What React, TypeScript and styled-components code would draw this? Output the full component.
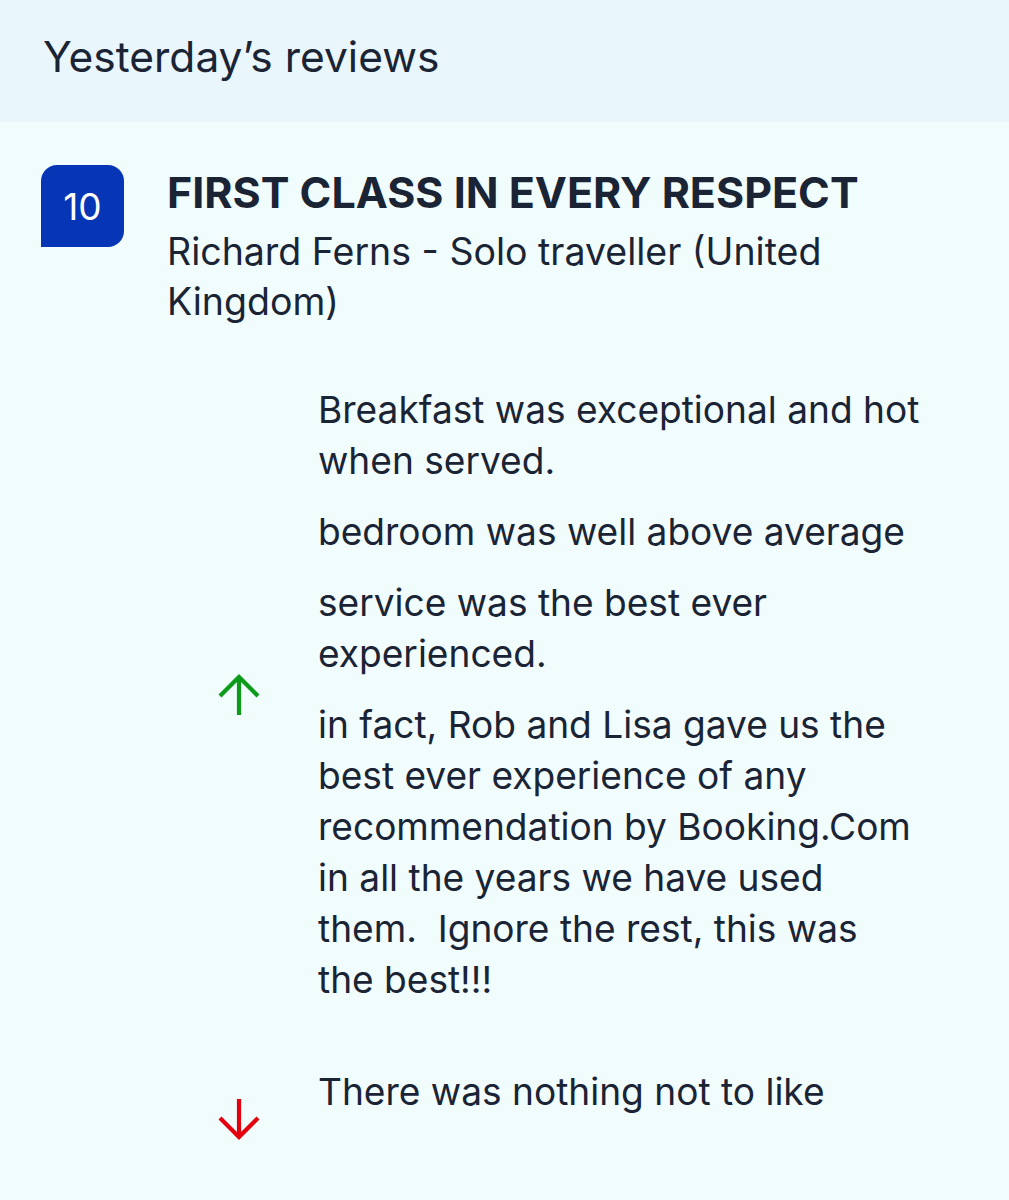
import styled, {createGlobalStyle} from "styled-components";

const GlobalStyle = createGlobalStyle`
  html, body {
    margin: 0;
    padding: 0;
    background: #f1fcfd;
  }
  body {
    font-family: Inter, "Noto Sans", "Liberation Sans", sans-serif;
    color: #1a2435;
  }
`;

const Page = styled.div`
  min-height: 1200px;
  background: #f1fcfd;
`;

const Header = styled.header`
  height: 122px;
  display: flex;
  align-items: center;
  padding: 0 0 10px 43px;
  box-sizing: border-box;
  background: #e9f6fb;
`;

const HeaderTitle = styled.h1`
  margin: 0;
  font-size: 42.5px;
  font-weight: 400;
`;

const Review = styled.article`
  display: flex;
  align-items: flex-start;
  gap: 43px;
  padding: 43px 0 0 41px;
`;

const Score = styled.div`
  flex: none;
  width: 83px;
  height: 82px;
  display: flex;
  align-items: center;
  justify-content: center;
  background: #0636b6;
  color: #fff;
  font-size: 37px;
  border-radius: 16px 16px 16px 0;
`;

const Content = styled.div`
  display: flex;
  flex-direction: column;
`;

const Title = styled.h2`
  margin: 2px 0 0;
  font-size: 43px;
  line-height: 50px;
  font-weight: 700;
`;

const Author = styled.p`
  margin: 10px 0 0;
  font-size: 37.5px;
  line-height: 50px;
  width: 690px;
`;

const Section = styled.section<{ $gap: number }>`
  display: grid;
  grid-template-columns: 143px 1fr;
  column-gap: 8px;
  align-items: center;
  margin-top: ${p => p.$gap}px;
`;

const IconCell = styled.div<{ $shift?: number }>`
  display: flex;
  justify-content: center;
  transform: translateY(${p => p.$shift || 0}px);
`;

const Body = styled.div`
  display: flex;
  flex-direction: column;
  gap: 20px;
`;

const Para = styled.p`
  margin: 0;
  font-size: 37.1px;
  line-height: 51px;
`;

const Arrow = ({up}: { up?: boolean }) => (
    <svg width="42" height="42" viewBox="0 0 42 42" fill="none"
         stroke={up ? "#0c9c1a" : "#e4000f"} strokeWidth="4.2" strokeLinecap="butt">
        {up ? (
            <>
                <path d="M21 3 V41"/>
                <path d="M2 22 L21 3 L40 22"/>
            </>
        ) : (
            <>
                <path d="M21 1 V39"/>
                <path d="M2 20 L21 39 L40 20"/>
            </>
        )}
    </svg>
);

const liked = [
    ["Breakfast was exceptional and hot", "when served."],
    ["bedroom was well above average"],
    ["service was the best ever", "experienced."],
    [
        "in fact, Rob and Lisa gave us the",
        "best ever experience of any",
        "recommendation by Booking.Com",
        "in all the years we have used",
        "them.\u00a0 Ignore the rest, this was",
        "the best!!!",
    ],
];

const lines = (l: string[]) => l.map((t, i) => (
    <span key={i}>{t}{i < l.length - 1 && <br/>}</span>
));

export default function App() {
    return (
        <Page>
            <GlobalStyle/>
            <Header>
                <HeaderTitle>Yesterday’s reviews</HeaderTitle>
            </Header>
            <Review>
                <Score>10</Score>
                <Content>
                    <Title>FIRST CLASS IN EVERY RESPECT</Title>
                    <Author>Richard Ferns - Solo traveller (United Kingdom)</Author>
                    <Section $gap={57}>
                        <IconCell><Arrow up/></IconCell>
                        <Body>
                            {liked.map((p, i) => <Para key={i}>{lines(p)}</Para>)}
                        </Body>
                    </Section>
                    <Section $gap={61}>
                        <IconCell $shift={27}><Arrow/></IconCell>
                        <Body>
                            <Para>There was nothing not to like</Para>
                        </Body>
                    </Section>
                </Content>
            </Review>
        </Page>
    );
}
